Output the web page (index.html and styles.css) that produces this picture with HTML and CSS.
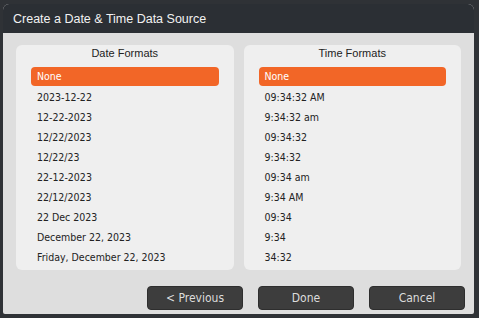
FILE: index.html
```html
<!DOCTYPE html>
<html>
<head>
<meta charset="utf-8">
<link rel="stylesheet" href="styles.css">
</head>
<body>
<div class="dialog">
  <div class="titlebar">Create a Date &amp; Time Data Source</div>
  <div class="content">
    <div class="panels">
      <div class="panel">
        <div class="panel-title">Date Formats</div>
        <ul class="list">
          <li class="item selected">None</li>
          <li class="item">2023-12-22</li>
          <li class="item">12-22-2023</li>
          <li class="item">12/22/2023</li>
          <li class="item">12/22/23</li>
          <li class="item">22-12-2023</li>
          <li class="item">22/12/2023</li>
          <li class="item">22 Dec 2023</li>
          <li class="item">December 22, 2023</li>
          <li class="item">Friday, December 22, 2023</li>
        </ul>
      </div>
      <div class="panel">
        <div class="panel-title">Time Formats</div>
        <ul class="list">
          <li class="item selected">None</li>
          <li class="item">09:34:32 AM</li>
          <li class="item">9:34:32 am</li>
          <li class="item">09:34:32</li>
          <li class="item">9:34:32</li>
          <li class="item">09:34 am</li>
          <li class="item">9:34 AM</li>
          <li class="item">09:34</li>
          <li class="item">9:34</li>
          <li class="item">34:32</li>
        </ul>
      </div>
    </div>
    <div class="footer">
      <button class="btn">&lt; Previous</button>
      <button class="btn">Done</button>
      <button class="btn">Cancel</button>
    </div>
  </div>
</div>
</body>
</html>
```

FILE: styles.css
```css
html, body {
  margin: 0;
  padding: 0;
}
body {
  width: 479px;
  height: 318px;
  background: #2f3236;
  box-sizing: border-box;
  padding: 4px 5px 4px 3px;
  overflow: hidden;
}
.dialog {
  height: 310px;
  display: flex;
  flex-direction: column;
  border-radius: 6px 6px 2px 2px;
  overflow: hidden;
  background: #dedede;
}
.titlebar {
  height: 29px;
  flex: none;
  background: #2b2f34;
  color: #f2f2f2;
  font-family: "Liberation Sans", Arial, sans-serif;
  font-size: 12.5px;
  line-height: 30px;
  padding-left: 10px;
  box-sizing: border-box;
}
.content {
  flex: 1;
  display: flex;
  flex-direction: column;
  padding: 12px 13px 5px 13px;
}
.panels {
  display: flex;
  gap: 10px;
  height: 225px;
}
.panel {
  flex: 1;
  background: #efefef;
  border-radius: 6px;
  padding: 1px 15px 0 15px;
}
.panel-title {
  font-family: "Liberation Sans", Arial, sans-serif;
  font-size: 11px;
  color: #222;
  text-align: center;
  line-height: 14px;
  margin-bottom: 7px;
}
.list {
  list-style: none;
  margin: 0;
  padding: 0;
}
.item {
  font-family: "DejaVu Sans Condensed", "Liberation Sans", sans-serif;
  font-size: 10.5px;
  color: #222;
  line-height: 20px;
  height: 20px;
  padding-left: 6px;
}
.item.selected {
  background: #f26627;
  color: #fff;
  border-radius: 4px;
  height: 19px;
  line-height: 19px;
  margin-bottom: 1px;
}
.footer {
  display: flex;
  justify-content: flex-end;
  gap: 15px;
  margin-top: 16px;
  margin-right: -4px;
}
.btn {
  width: 96px;
  height: 24px;
  background: #3d3d3d;
  border: 1px solid #2e2e2e;
  border-radius: 4px;
  color: #dcdcdc;
  font-family: "DejaVu Sans Condensed", "Liberation Sans", sans-serif;
  font-size: 12px;
  padding: 0;
}
```
